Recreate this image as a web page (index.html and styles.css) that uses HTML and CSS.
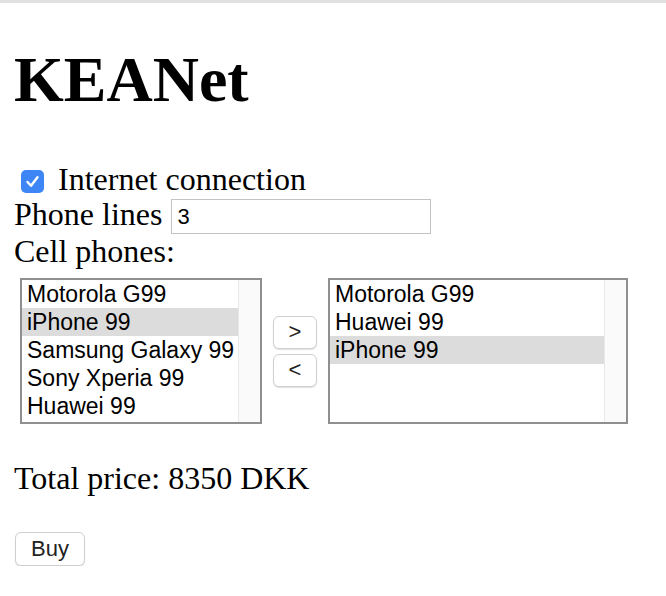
FILE: index.html
```html
<!DOCTYPE html>
<html lang="en">
<head>
<meta charset="utf-8">
<title>KEANet</title>
<link rel="stylesheet" href="styles.css">
</head>
<body>
<main class="page">
  <h1 class="title">KEANet</h1>
  <form class="order">
    <label class="row row-check">
      <span class="checkbox" role="checkbox" aria-checked="true">
        <svg viewBox="0 0 23 23" width="23" height="23"><path d="M6.5 12 L10 15.8 L16.5 7.2" fill="none" stroke="#fff" stroke-width="2.4" stroke-linecap="round" stroke-linejoin="round"/></svg>
      </span>
      <span class="label-text">Internet connection</span>
    </label>
    <label class="row row-lines">
      <span class="label-text">Phone lines</span>
      <input class="textbox" type="text" value="3">
    </label>
    <div class="row row-cells">Cell phones:</div>
    <div class="lists">
      <div class="listbox listbox-left" role="listbox">
        <div class="options">
          <div class="option">Motorola G99</div>
          <div class="option selected">iPhone 99</div>
          <div class="option">Samsung Galaxy 99</div>
          <div class="option">Sony Xperia 99</div>
          <div class="option">Huawei 99</div>
        </div>
        <div class="track"></div>
      </div>
      <div class="movers">
        <button type="button" class="btn btn-move">&gt;</button>
        <button type="button" class="btn btn-move">&lt;</button>
      </div>
      <div class="listbox listbox-right" role="listbox">
        <div class="options">
          <div class="option">Motorola G99</div>
          <div class="option">Huawei 99</div>
          <div class="option selected">iPhone 99</div>
        </div>
        <div class="track"></div>
      </div>
    </div>
    <p class="total">Total price: 8350 DKK</p>
    <button type="button" class="btn btn-buy">Buy</button>
  </form>
</main>
</body>
</html>
```

FILE: styles.css
```css
html {
  border-top: 3px solid #e1e1e3;
  background: #fff;
}

body {
  margin: 0 0 0 14px;
  font-family: "Liberation Serif", "Times New Roman", serif;
  font-size: 32px;
  line-height: 37px;
  color: #000;
}

.title {
  margin: 40px 0 0;
  font-size: 64px;
  line-height: 74px;
  font-weight: bold;
}

.order {
  margin: 0;
}

.row {
  display: flex;
  align-items: flex-start;
}

.row-check {
  margin-top: 45px;
  height: 34px;
  line-height: 34px;
}

.checkbox {
  width: 23px;
  height: 23px;
  margin: 8px 14px 0 7px;
  border-radius: 5px;
  background: #3e86f5;
  display: flex;
}

.row-lines {
  height: 37px;
  line-height: 36px;
}

.textbox {
  box-sizing: border-box;
  width: 260px;
  height: 35px;
  margin: 3px 0 0 9px;
  padding: 0 5px;
  border: 1px solid #c3c3c3;
  border-radius: 0;
  font-family: "Liberation Sans", Arial, sans-serif;
  font-size: 22px;
  color: #000;
  outline: none;
}

.row-cells {
  height: 37px;
  line-height: 37px;
}

.lists {
  display: flex;
  align-items: center;
  margin-top: 8px;
  padding-left: 6px;
}

.listbox {
  box-sizing: border-box;
  height: 146px;
  border: 2px solid #8f8f8f;
  display: flex;
  font-family: "Liberation Sans", Arial, sans-serif;
  font-size: 23px;
  line-height: 28px;
  overflow: hidden;
}

.listbox-left {
  width: 242px;
}

.listbox-right {
  width: 300px;
}

.options {
  flex: 1;
  min-width: 0;
}

.option {
  height: 28px;
  padding-left: 5px;
  white-space: nowrap;
}

.option.selected {
  background: #dcdcdc;
}

.track {
  width: 21px;
  border-left: 1px solid #e9e9e9;
  background: #fafafa;
}

.movers {
  display: flex;
  flex-direction: column;
  gap: 5px;
  margin: 0 11px;
}

.btn {
  box-sizing: border-box;
  border: 1px solid #d0d0d0;
  border-radius: 6px;
  background: #fff;
  box-shadow: 0 1px 1px rgba(0, 0, 0, 0.12);
  font-family: "Liberation Sans", Arial, sans-serif;
  font-size: 22px;
  color: #222;
  padding: 0;
  cursor: pointer;
}

.btn-move {
  width: 44px;
  height: 33px;
  font-size: 22px;
}

.total {
  margin: 36px 0 0;
  line-height: 37px;
}

.btn-buy {
  display: block;
  width: 70px;
  height: 34px;
  margin: 35px 0 0 1px;
}
```
